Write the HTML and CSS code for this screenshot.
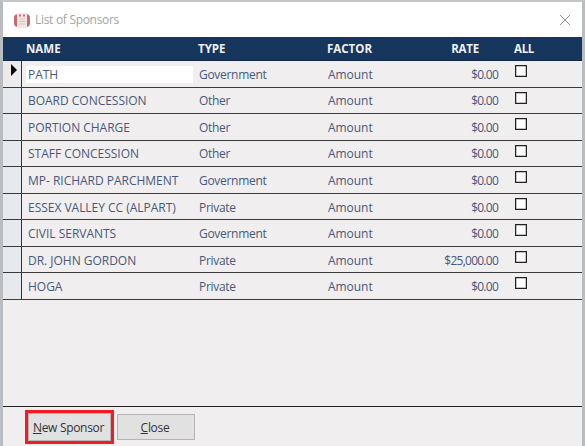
FILE: index.html
```html
<!DOCTYPE html>
<html lang="en">
<head>
<meta charset="utf-8">
<title>List of Sponsors</title>
<link rel="stylesheet" href="styles.css">
</head>
<body>
<div class="window">
  <div class="titlebar">
    <svg class="appicon" width="18" height="18" viewBox="0 0 18 18">
      <rect x="1" y="3" width="16" height="13" rx="4" fill="#c26a70"/>
      <rect x="4" y="2" width="10" height="15" rx="1" fill="#f1e8e6"/>
      <rect x="6" y="3.5" width="2" height="2" fill="#d0646b"/>
      <rect x="10" y="3.5" width="2" height="2" fill="#d0646b"/>
      <path d="M5.5 8h7M5.5 10.5h7M5.5 13h7" stroke="#d3c6c4" stroke-width="1"/>
    </svg>
    <span class="title">List of Sponsors</span>
    <svg class="closex" width="12" height="12" viewBox="0 0 12 12"><path d="M1 1l10 10M11 1L1 11" stroke="#8f8f8f" stroke-width="1" fill="none"/></svg>
  </div>
  <div class="grid-head">
    <span class="c-name">NAME</span>
    <span class="c-type">TYPE</span>
    <span class="c-factor">FACTOR</span>
    <span class="c-rate">RATE</span>
    <span class="c-all">ALL</span>
  </div>
  <div class="rows">
    <div class="row first"><div class="sel"><i class="arrow"></i></div><span class="c-name"><span class="editing">PATH</span></span><span class="c-type">Government</span><span class="c-factor">Amount</span><span class="c-rate">$0.00</span><span class="c-all"><i class="check"></i></span></div>
    <div class="row"><div class="sel"></div><span class="c-name">BOARD CONCESSION</span><span class="c-type">Other</span><span class="c-factor">Amount</span><span class="c-rate">$0.00</span><span class="c-all"><i class="check"></i></span></div>
    <div class="row"><div class="sel"></div><span class="c-name">PORTION CHARGE</span><span class="c-type">Other</span><span class="c-factor">Amount</span><span class="c-rate">$0.00</span><span class="c-all"><i class="check"></i></span></div>
    <div class="row"><div class="sel"></div><span class="c-name">STAFF CONCESSION</span><span class="c-type">Other</span><span class="c-factor">Amount</span><span class="c-rate">$0.00</span><span class="c-all"><i class="check"></i></span></div>
    <div class="row"><div class="sel"></div><span class="c-name">MP- RICHARD PARCHMENT</span><span class="c-type">Government</span><span class="c-factor">Amount</span><span class="c-rate">$0.00</span><span class="c-all"><i class="check"></i></span></div>
    <div class="row"><div class="sel"></div><span class="c-name">ESSEX VALLEY CC (ALPART)</span><span class="c-type">Private</span><span class="c-factor">Amount</span><span class="c-rate">$0.00</span><span class="c-all"><i class="check"></i></span></div>
    <div class="row"><div class="sel"></div><span class="c-name">CIVIL SERVANTS</span><span class="c-type">Government</span><span class="c-factor">Amount</span><span class="c-rate">$0.00</span><span class="c-all"><i class="check"></i></span></div>
    <div class="row"><div class="sel"></div><span class="c-name">DR. JOHN GORDON</span><span class="c-type">Private</span><span class="c-factor">Amount</span><span class="c-rate">$25,000.00</span><span class="c-all"><i class="check"></i></span></div>
    <div class="row"><div class="sel"></div><span class="c-name">HOGA</span><span class="c-type">Private</span><span class="c-factor">Amount</span><span class="c-rate">$0.00</span><span class="c-all"><i class="check"></i></span></div>
  </div>
  <div class="footer">
    <div class="highlight"><button class="btn btn-new" type="button"><u>N</u>ew Sponsor</button></div>
    <button class="btn btn-close" type="button"><u>C</u>lose</button>
  </div>
</div>
</body>
</html>
```

FILE: styles.css
```css
* { box-sizing: border-box; }
html, body { margin: 0; padding: 0; }
body { width: 585px; height: 446px; overflow: hidden; background: #f0eeee; }
.window {
  width: 585px; height: 446px;
  border-left: 3px solid #b9bcc0; border-right: 3px solid #b9bcc0; border-top: 2px solid #c4c6c9;
  display: flex; flex-direction: column;
  background: #f0eeee;
  font-family: "Open Sans", "Noto Sans", sans-serif;
  font-size: 12px;
}
.titlebar { height: 35px; background: #fff; display: flex; align-items: center; padding: 0 11px 0 10px; flex: none; }
.appicon { flex: none; margin-right: 4px; }
.title { color: #a3a3a3; font-size: 12px; letter-spacing: -0.3px; flex: 1; }
.grid-head, .row { display: grid; grid-template-columns: 19px 176px 129px 80px 92px 1fr; align-items: center; }
.grid-head { height: 24px; background: #17365d; color: #eef1f5; font-weight: 700; font-size: 11.5px; flex: none; border-bottom: 1px solid #10294a; }
.grid-head .c-name { grid-column: 2; padding-left: 4px; }
.grid-head .c-rate { padding-right: 20px; letter-spacing: -0.2px; }
.grid-head .c-all { padding-left: 15px; letter-spacing: -0.3px; }
.rows { flex: none; }
.row { height: 26.55px; border-bottom: 1px solid #3a3a3a; color: #47597a; font-size: 12px; }
.row > span { padding-top: 1px; }
.row > .c-type, .row > .c-factor { padding-left: 1px; }
.row > .c-type { letter-spacing: -0.3px; }
.row > .c-factor { letter-spacing: -0.05px; }
.row > .c-rate { letter-spacing: -0.75px; padding-right: 1px; }
.sel { height: 100%; background: #e6e9ed; border-right: 1px solid #333; position: relative; }
.first .sel { background: #eceaea; }
.arrow { position: absolute; left: 8px; top: 3px; width: 0; height: 0; border-left: 6px solid #000; border-top: 6px solid transparent; border-bottom: 6px solid transparent; }
.c-name { white-space: nowrap; }
.row > .c-name { padding-left: 6px; letter-spacing: -0.02px; }
.row.first > .c-name { padding-top: 0; }
.editing { display: block; background: #fff; width: 167px; height: 17px; line-height: 17px; margin-left: -2px; padding-left: 2px; margin-top: 1px; }
.c-rate { text-align: right; }
.row > .c-all { align-self: start; padding: 4px 0 0 16px; line-height: 0; }
.check { display: inline-block; width: 12px; height: 12px; background: #fff; border: 1px solid #222; box-shadow: inset 0 0 0 0.5px #888; }
.footer { margin-top: auto; height: 40px; border-top: 1px solid #222; display: flex; align-items: flex-start; padding: 3px 0 0 22px; gap: 3px; flex: none; }
.highlight { border: 3px solid #ee1c25; width: 89px; height: 34px; flex: none; }
.btn { font-family: inherit; font-size: 12px; color: #333; background: #e2e1e1; border: 1px solid #b5b5b5; padding: 0 2px 0 0; letter-spacing: -0.3px; }
.btn-new { width: 100%; height: 100%; }
.btn-close { width: 78px; height: 26px; margin-top: 4px; flex: none; }
```
